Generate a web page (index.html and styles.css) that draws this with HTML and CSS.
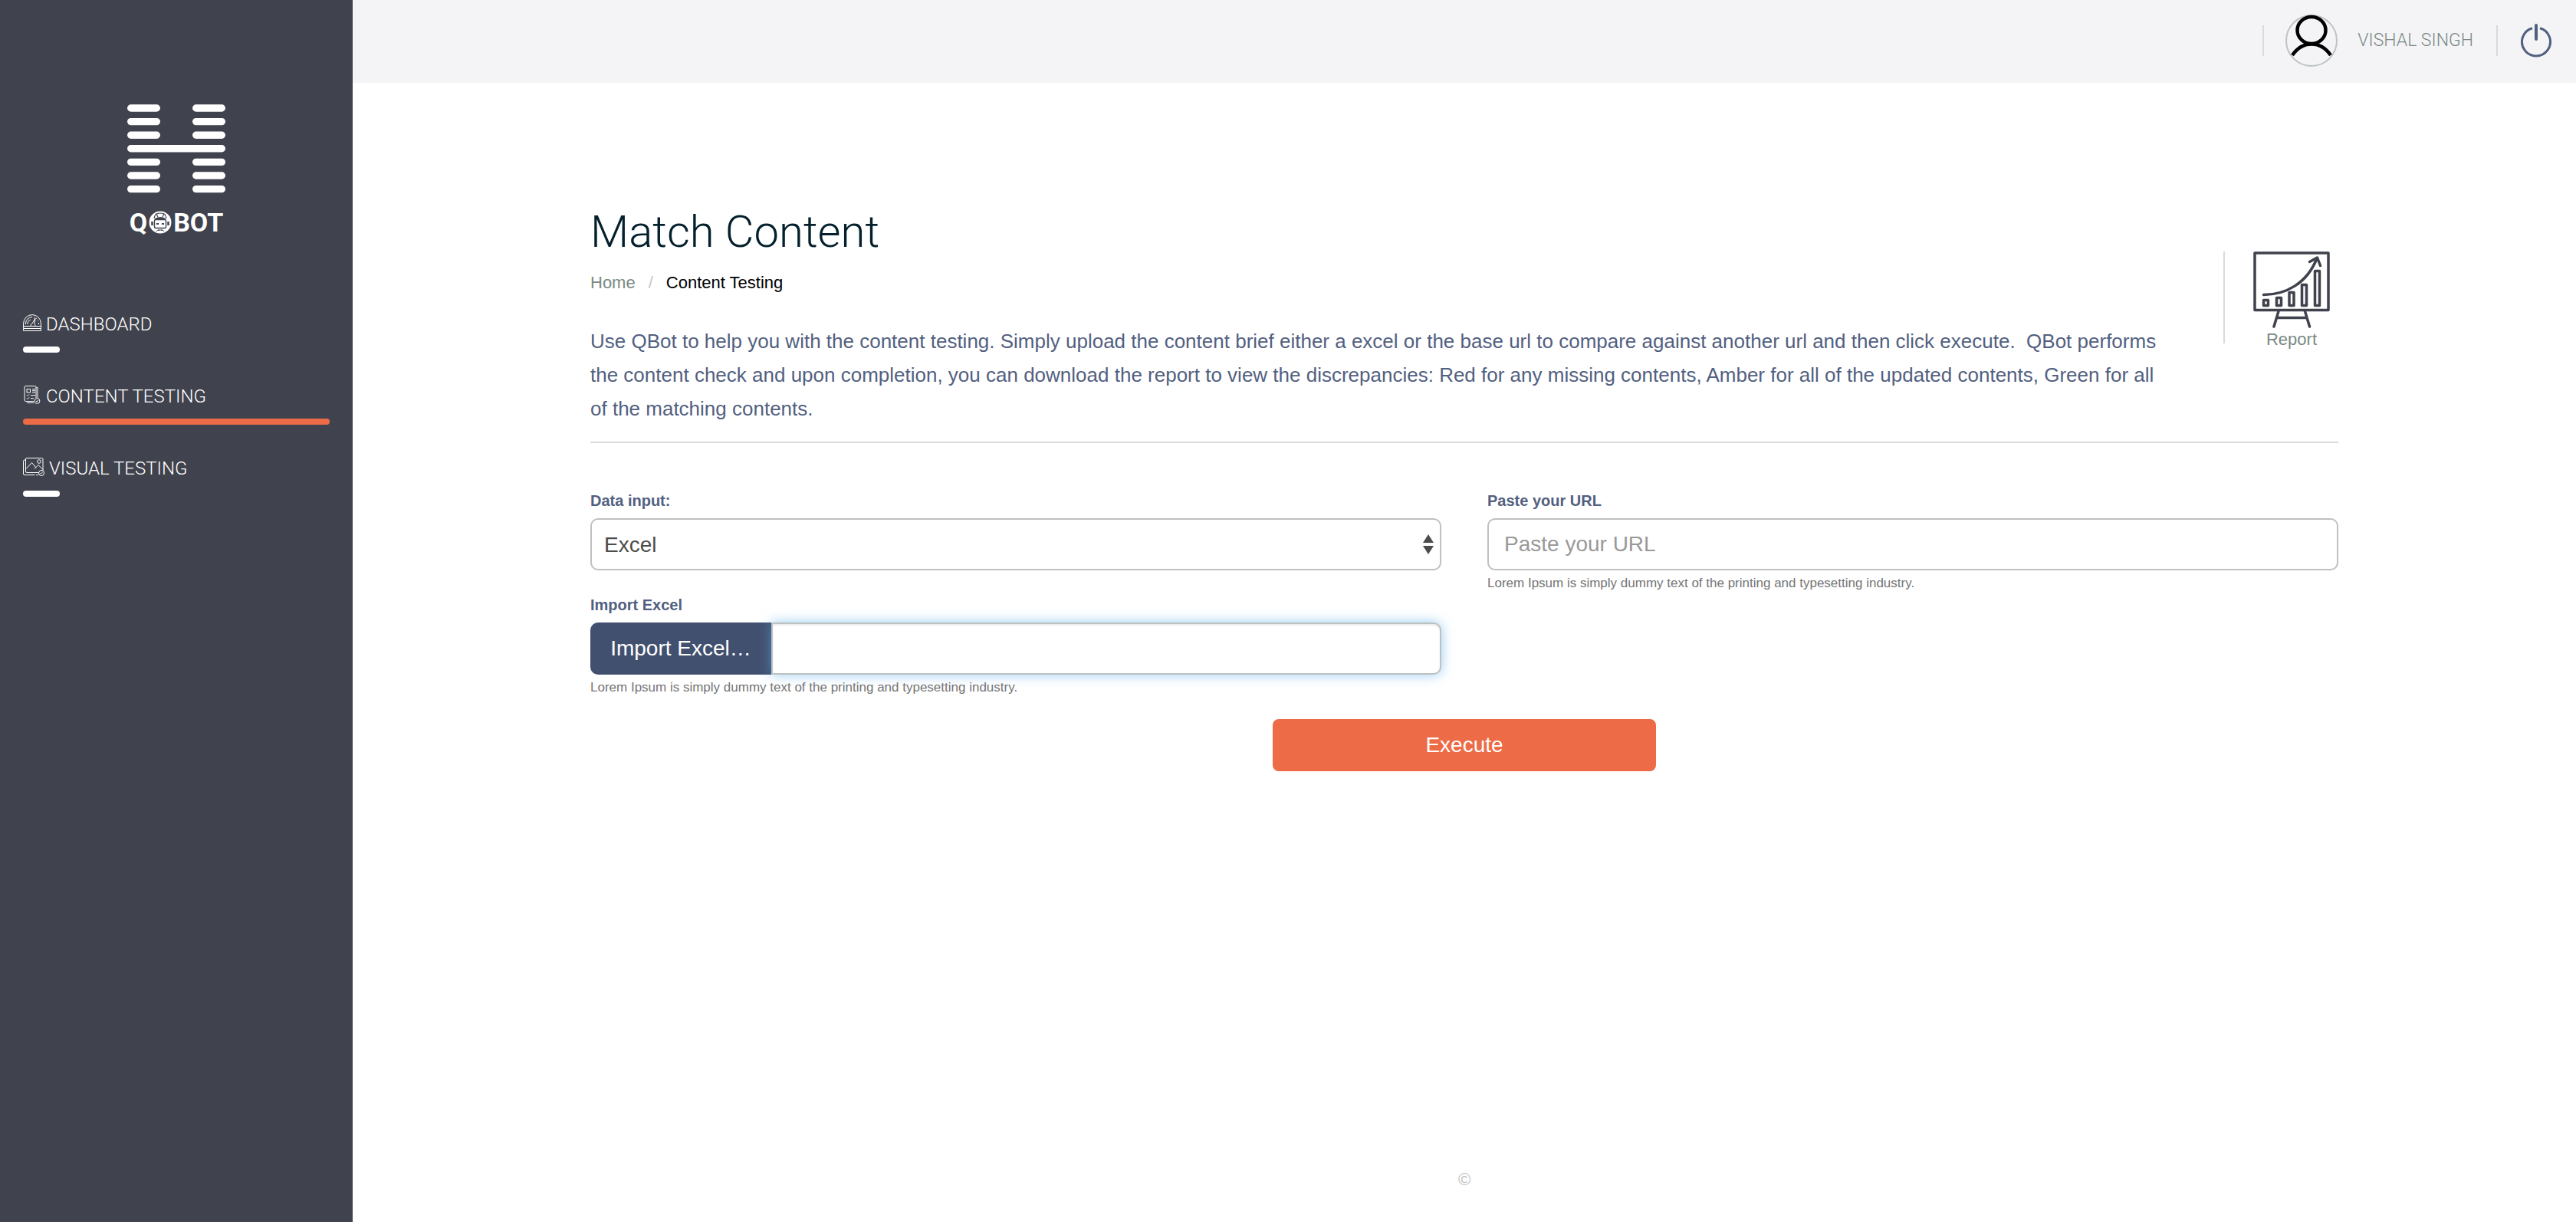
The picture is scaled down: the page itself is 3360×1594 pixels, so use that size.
FILE: index.html
```html
<!DOCTYPE html>
<html lang="en">
<head>
<meta charset="utf-8">
<title>QBot – Match Content</title>
<link rel="stylesheet" href="styles.css">
</head>
<body>
<div class="app">
  <aside class="sidebar">
    <a class="logo" href="#" aria-label="QBot">
      <svg class="logo-mark" width="128" height="116" viewBox="0 0 128 116" stroke="#fff" stroke-width="9.400" stroke-linecap="round">
        <path d="M4.700 5H38.300M89.700 5h33.600M4.700 22.600H38.300M89.700 22.600h33.600M4.700 40.200H38.300M89.700 40.200h33.600M4.700 57.800H123.300M4.700 75.400H38.300M89.700 75.400h33.600M4.700 93H38.300M89.700 93h33.600M4.700 110.600H38.300M89.700 110.600h33.600"/>
      </svg>
      <span class="logo-name">Q<svg width="30" height="30" viewBox="0 0 30 30">
          <circle cx="15" cy="15" r="14.500" fill="#fff"/>
          <path d="M7 10Q8 5 10 4l2 4M23 10Q22 5 20 4l-2 4M10 4q5-2 10 0" fill="none" stroke="#40424d" stroke-width="1.200"/>
          <path d="M8 10q7-4 14 0v2H8z" fill="#40424d"/>
          <rect x="7.500" y="11.500" width="15" height="11" rx="1.500" fill="#fff" stroke="#40424d" stroke-width="1.400"/>
          <path d="M4.500 14v5M25.500 14v5" stroke="#40424d" stroke-width="2.500"/>
          <path d="M10 17h3M17 17h3" stroke="#40424d" stroke-width="2"/>
          <path d="M10 27q0-2 5-2t5 2M13 24v2M17 24v2" fill="none" stroke="#40424d"/>
        </svg>BOT</span>
    </a>
    <nav class="nav">
      <a class="nav-item" href="#">
        <span class="nav-label">
          <svg width="24" height="24" viewBox="0 0 24 24" fill="none" stroke="#fff" stroke-width="1">
            <path d="M.6 16V13A11.400 11.400 0 0 1 23.400 13V16M0 16.500H24M.6 16v6.500H23.400V16M1 19.500H23M3.500 14V13A8.500 8.500 0 0 1 12 4.500" />
            <path d="M6 14a6 6 0 0 1 4-6M10 16q0-2 2-3l4-7-1 7.500q1 1 1 2.500M20.500 14v-2" />
            <path d="M14 4.700A8.500 8.500 0 0 1 20 10" stroke-dasharray="1.500 1.500"/>
          </svg>
          DASHBOARD
        </span>
      </a>
      <a class="nav-item active" href="#" aria-current="page">
        <span class="nav-label">
          <svg width="24" height="24" viewBox="0 0 24 24" fill="none" stroke="#fff" stroke-width="1">
            <path d="M14 20.500H3.500Q2 20.500 2 19V2Q2 .6 3.500.6H15.500Q17 .6 17 2V16M17.500 2.500H19V16M5 22.500h9"/>
            <path d="M5 4.500h4.500V9H5zM12 4.500h4M12 6.700h4M12 9h4M5 12.500l1 1 2-2M10 12.700h6M5 16.500l1 1 2-2M10 16.700h4"/>
            <circle cx="18.500" cy="20" r="3.400"/><path d="M17 20l1 1 2-2"/>
          </svg>
          CONTENT TESTING
        </span>
      </a>
      <a class="nav-item" href="#">
        <span class="nav-label">
          <svg width="28" height="24" viewBox="0 0 28 24" fill="none" stroke="#fff" stroke-width="1">
            <path d="M20 19.500H5Q3.500 19.500 3.500 18V2Q3.500.5 5 .5H24.500Q26 .5 26 2V17M3 3H2Q.5 3 .5 4.500V21Q.5 22.500 2 22.500H15.500M17 22.500h3"/>
            <path d="M4 14.500L11.500 6.500 17 13M15 14.500L20 9.500l6 6"/>
            <circle cx="21" cy="5" r="2.300"/><circle cx="24" cy="20" r="3.500"/><path d="M22.500 20l1 1 2-2"/>
          </svg>
          VISUAL TESTING
        </span>
      </a>
    </nav>
  </aside>

  <div class="page">
    <header class="topbar">
      <a class="user" href="#">
        <svg width="68" height="68" viewBox="0 0 68 68" fill="none">
          <circle cx="34" cy="34" r="33" stroke="#bdc3c1" stroke-width="2"/>
          <ellipse cx="34" cy="20.500" rx="18.500" ry="17.500" stroke="#000" stroke-width="4.500"/>
          <path d="M9 53Q19 38.500 34 38.500T59 53" stroke="#000" stroke-width="4.500"/>
        </svg>
        <span>VISHAL SINGH</span>
      </a>
      <button class="power" type="button" aria-label="Log out">
        <svg width="40" height="44" viewBox="0 0 40 44" fill="none" stroke="#526080" stroke-linecap="round">
          <path d="M15 5.700A18.500 18.500 0 1 0 25 5.700" stroke-width="3" stroke-linecap="butt"/>
          <path d="M20 2V20" stroke-width="4"/>
        </svg>
      </button>
    </header>

    <main class="content">
      <section class="intro">
        <div class="intro-text">
          <h1>Match Content</h1>
          <nav class="breadcrumb" aria-label="Breadcrumb"><a href="#">Home</a><span class="slash">/</span><span class="current">Content Testing</span></nav>
          <p>Use QBot to help you with the content testing. Simply upload the content brief either a excel or the base url to compare against another url and then click execute.&nbsp; QBot performs the content check and upon completion, you can download the report to view the discrepancies: Red for any missing contents, Amber for all of the updated contents, Green for all of the matching contents.</p>
        </div>
        <a class="report" href="#">
          <svg width="100" height="100" viewBox="0 0 100 100" fill="none" stroke="#40424d" stroke-width="3.500" stroke-linejoin="round" stroke-linecap="round">
            <path d="M2 2H98V76.500H2z"/>
            <path d="M13.500 63.500h6v7h-6zM30.500 60.500h6v10h-6zM47 53.500h6v17h-6zM63.500 43.500h6v27h-6zM80.500 25.500h6v45h-6z"/>
            <path d="M13.500 56.500C42 56.500 70 42 83 9M73.500 13.500L83.500 8l4 10.500"/>
            <path d="M33 78L27 98M67.500 78l6 20M30.500 86.500H70"/>
          </svg>
          <span>Report</span>
        </a>
      </section>

      <form class="form">
        <div class="columns">
          <div class="column">
            <div class="field">
              <label for="source">Data input:</label>
              <div class="select-box">
                <select id="source"><option>Excel</option><option>URL</option></select>
                <svg width="14" height="26" viewBox="0 0 14 26" fill="#4c4c4c"><path d="M7 0l7 11H0zM7 26l7-11H0z"/></svg>
              </div>
            </div>
            <div class="field">
              <label for="file">Import Excel</label>
              <div class="file">
                <button type="button">Import Excel…</button>
                <input id="file" type="text">
              </div>
              <small>Lorem Ipsum is simply dummy text of the printing and typesetting industry.</small>
            </div>
          </div>
          <div class="column">
            <div class="field">
              <label for="url">Paste your URL</label>
              <input id="url" type="text" placeholder="Paste your URL">
              <small>Lorem Ipsum is simply dummy text of the printing and typesetting industry.</small>
            </div>
          </div>
        </div>
        <button class="execute" type="submit">Execute</button>
      </form>
    </main>
    <footer class="footer">©</footer>
  </div>
</div>
</body>
</html>
```
FILE: styles.css
```css
* {
  box-sizing: border-box;
}

body {
  margin: 0;
  font-family: "Liberation Sans", Arial, sans-serif;
  color: #526080;
  background: #fff;
}

a {
  color: inherit;
  text-decoration: none;
}

button,
input,
select {
  font: inherit;
}

svg {
  display: block;
  flex: none;
}

.app {
  display: flex;
  min-height: 100vh;
}

/* Sidebar */
.sidebar {
  flex: none;
  width: 460px;
  padding: 136px 30px 40px;
  background: #40424d;
  color: #fff;
}

.logo {
  display: flex;
  flex-direction: column;
  align-items: center;
  gap: 20px;
}

.logo-name {
  display: flex;
  align-items: center;
  gap: 2px;
  font: bold 34px/36px Roboto, sans-serif;
}

.nav {
  display: flex;
  flex-direction: column;
  gap: 38px;
  margin-top: 96px;
}

.nav-label {
  display: flex;
  align-items: center;
  gap: 6px;
  font: 300 24px/38px Roboto, sans-serif;
}

.nav-label svg {
  margin-bottom: 4px;
}

.nav-item::after {
  content: "";
  display: block;
  width: 48px;
  height: 8px;
  margin-top: 10px;
  border-radius: 4px;
  background: #fff;
}

.nav-item.active::after {
  width: 100%;
  background: #ed6b46;
}

/* Page */
.page {
  flex: 1;
  display: flex;
  flex-direction: column;
}

.topbar {
  display: flex;
  justify-content: flex-end;
  align-items: center;
  height: 108px;
  padding: 0 32px 2px;
  background: #f4f4f7;
}

.user,
.power {
  display: flex;
  align-items: center;
  height: 40px;
  border: 0 solid #d9dadb;
  border-left-width: 2px;
  background: none;
}

.user {
  gap: 26px;
  padding: 0 30px 0 28px;
  font: 300 23px/32px Roboto, sans-serif;
  color: #7b8a84;
}

.power {
  padding: 0 0 0 30px;
}

.content {
  padding: 158px 310px 40px;
}

.intro {
  display: flex;
  justify-content: space-between;
  padding-bottom: 21px;
  border-bottom: 2px solid #dadada;
}

.intro-text {
  flex: 1;
  max-width: 2060px;
}

h1 {
  margin: 0 0 15px;
  font: 300 58px/72px Roboto, sans-serif;
  color: #04202c;
}

.breadcrumb {
  display: flex;
  gap: 17px;
  font-size: 22px;
  line-height: 32px;
  color: #7b8a84;
}

.slash {
  color: #c4c8c7;
}

.current {
  color: #000;
}

p {
  margin: 38px 0 0;
  font-size: 26px;
  line-height: 44px;
}

.report {
  display: flex;
  flex-direction: column;
  align-items: center;
  width: 150px;
  height: 120px;
  margin-top: 62px;
  padding: 0 10px 0 36px;
  border-left: 2px solid #dadada;
  font-size: 22px;
  line-height: 30px;
  color: #7b8a84;
}

/* Form */
.form {
  display: flex;
  flex-direction: column;
  align-items: center;
  padding-top: 61px;
}

.columns {
  display: flex;
  gap: 60px;
  width: 100%;
}

.column {
  flex: 1;
  display: flex;
  flex-direction: column;
  gap: 31px;
}

.field {
  display: flex;
  flex-direction: column;
}

label {
  margin-bottom: 9px;
  font-size: 20px;
  font-weight: bold;
  line-height: 28px;
}

input,
select {
  width: 100%;
  height: 68px;
  padding: 0 20px;
  border: 2px solid #bdc1c0;
  border-radius: 10px;
  background: #fff;
  font-size: 28px;
  color: #4c4c4c;
}

select {
  appearance: none;
  padding: 0 16px;
}

input::placeholder {
  color: #999;
}

.select-box {
  position: relative;
}

.select-box svg {
  position: absolute;
  top: 21px;
  right: 10px;
  pointer-events: none;
}

.file {
  display: flex;
}

.file button {
  flex: none;
  width: 236px;
  border: 0;
  border-radius: 10px 0 0 10px;
  background: #42506f;
  font-size: 28px;
  color: #fff;
}

.file input {
  flex: 1;
  border-radius: 0 10px 10px 0;
  box-shadow: inset 0 2px 2px rgba(0, 0, 0, 0.08), 0 0 16px rgba(82, 168, 236, 0.6);
}

small {
  margin-top: 5px;
  font-size: 17px;
  line-height: 24px;
  color: #757575;
}

.execute {
  width: 500px;
  height: 68px;
  margin-top: 29px;
  border: 0;
  border-radius: 8px;
  background: #ed6b46;
  font-size: 28px;
  color: #fff;
}

.footer {
  margin-top: auto;
  padding-bottom: 40px;
  font-size: 22px;
  line-height: 30px;
  text-align: center;
  color: #bdc1c0;
}
```
